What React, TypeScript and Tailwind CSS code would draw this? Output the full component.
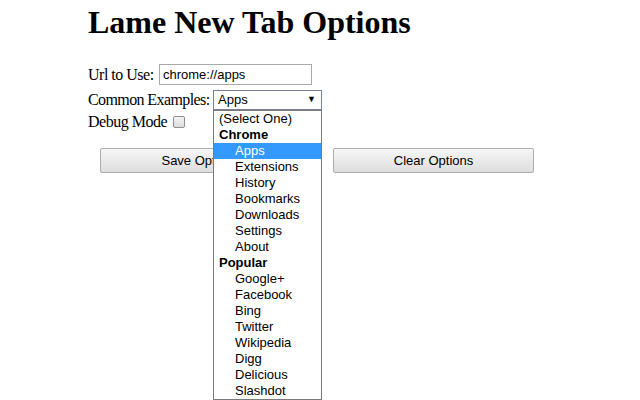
import React from "react";

const serif = { fontFamily: '"Liberation Serif", "Times New Roman", serif' };
const sans = { fontFamily: '"Liberation Sans", Arial, sans-serif' };

type Item = { label: string; group?: boolean; indent?: boolean; selected?: boolean };

const items: Item[] = [
  { label: "(Select One)" },
  { label: "Chrome", group: true },
  { label: "Apps", indent: true, selected: true },
  { label: "Extensions", indent: true },
  { label: "History", indent: true },
  { label: "Bookmarks", indent: true },
  { label: "Downloads", indent: true },
  { label: "Settings", indent: true },
  { label: "About", indent: true },
  { label: "Popular", group: true },
  { label: "Google+", indent: true },
  { label: "Facebook", indent: true },
  { label: "Bing", indent: true },
  { label: "Twitter", indent: true },
  { label: "Wikipedia", indent: true },
  { label: "Digg", indent: true },
  { label: "Delicious", indent: true },
  { label: "Slashdot", indent: true },
];

export default function App() {
  return (
    <div className="relative h-[400px] w-[640px] overflow-hidden bg-white text-black" style={serif}>
      <div className="pl-[88px]">
        <h1 className="mt-[4px] text-[32px] font-bold leading-[37px]" style={serif}>
          Lame New Tab Options
        </h1>
        <div className="mt-[23px] flex h-[21px] items-center text-[16px]">
          <span className="w-[71px] whitespace-nowrap tracking-[-0.5px]">Url to Use:</span>
          <div
            className="flex h-[21px] w-[153px] items-center border border-[#a9a9a9] bg-white pl-[3px] text-[13px]"
            style={sans}
          >
            chrome://apps
          </div>
        </div>
        <div className="mt-[5px] flex h-[20px] items-center text-[16px]">
          <span className="w-[125px] whitespace-nowrap tracking-[-0.6px]">Common Examples:</span>
          <div
            className="flex h-[20px] w-[109px] items-center justify-between border border-[#7b7f9e] bg-white pl-[4px] pr-[5px] text-[13px]"
            style={sans}
          >
            <span>Apps</span>
            <span className="text-[9px]">▼</span>
          </div>
        </div>
        <div className="mt-[2px] flex h-[20px] items-center text-[16px]">
          <span className="w-[85px] whitespace-nowrap tracking-[-0.5px]">Debug Mode</span>
          <div className="h-[12px] w-[12px] rounded-[2px] border border-[#8f8f8f] bg-gradient-to-b from-[#f4f4f4] to-[#dcdcdc]" />
        </div>
      </div>
      <div className="mt-[16px] flex gap-[32px] pl-[100px]">
        <button
          className="h-[25px] w-[201px] rounded-[2px] border border-[#acacac] bg-gradient-to-b from-[#f6f6f6] to-[#dedede] text-[13px]"
          style={sans}
        >
          Save Options
        </button>
        <button
          className="h-[25px] w-[201px] rounded-[2px] border border-[#acacac] bg-gradient-to-b from-[#f6f6f6] to-[#dedede] text-[13px]"
          style={sans}
        >
          Clear Options
        </button>
      </div>
      <div
        className="absolute left-[213px] top-[110px] w-[109px] border border-[#7a7a7a] bg-white text-[13px]"
        style={sans}
      >
        {items.map((it) => (
          <div
            key={it.label}
            className={`flex h-[16px] items-center leading-[16px] ${it.selected ? "bg-[#3399ff] text-white" : "text-black"} ${it.group ? "font-bold" : ""} ${it.indent ? "pl-[21px]" : "pl-[5px]"}`}
          >
            {it.label}
          </div>
        ))}
      </div>
    </div>
  );
}
